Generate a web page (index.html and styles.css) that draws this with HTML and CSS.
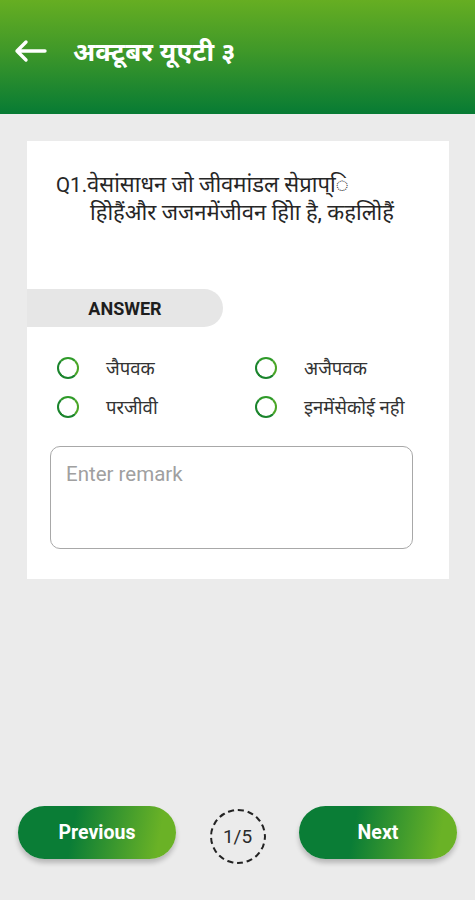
FILE: index.html
```html
<!DOCTYPE html>
<html lang="hi">
<head>
<meta charset="utf-8">
<title>अक्टूबर यूएटी ३</title>
<link rel="stylesheet" href="styles.css">
</head>
<body>
<div class="app">
  <header class="topbar">
    <svg class="back" width="34" height="24" viewBox="0 0 34 24" aria-hidden="true">
      <path d="M32 12H4M13 3L4 12l9 9" fill="none" stroke="#fff" stroke-width="3.4" stroke-linecap="round" stroke-linejoin="round"/>
    </svg>
    <h1 class="title">अक्टूबर यूएटी ३</h1>
  </header>

  <main class="content">
    <section class="card">
      <p class="question"><span class="qno">Q1.</span>वेसांसाधन जो जीवमांडल सेप्राप्ि<br>हिोहैंऔर जजनमेंजीवन हिोा है, कहलािेहैं</p>

      <div class="answer-tab">ANSWER</div>

      <div class="options">
        <label class="option"><span class="radio"></span><span class="opt-text">जैपवक</span></label>
        <label class="option"><span class="radio"></span><span class="opt-text">अजैपवक</span></label>
        <label class="option"><span class="radio"></span><span class="opt-text">परजीवी</span></label>
        <label class="option"><span class="radio"></span><span class="opt-text">इनमेंसेकोई नही</span></label>
      </div>

      <div class="remark">Enter remark</div>
    </section>
  </main>

  <footer class="nav">
    <button class="btn">Previous</button>
    <div class="counter">1/5</div>
    <button class="btn">Next</button>
  </footer>
</div>
</body>
</html>
```

FILE: styles.css
```css
* { box-sizing: border-box; }

html, body {
  margin: 0;
  padding: 0;
}

body {
  background: #ebebeb;
  font-family: Roboto, "Noto Sans", "DejaVu Sans", sans-serif;
  color: #222;
}

.app {
  min-height: 900px;
  display: flex;
  flex-direction: column;
}

.topbar {
  height: 114px;
  background: linear-gradient(180deg, #66ae22 0%, #3f9829 45%, #077b34 100%);
  display: flex;
  align-items: center;
  padding-left: 13px;
  padding-bottom: 12px;
}

.back {
  display: block;
  flex: none;
}

.title {
  margin: 0 0 0 26px;
  color: #fff;
  font-size: 26px;
  font-weight: 700;
  letter-spacing: 0.2px;
}

.content {
  padding: 27px 26px 0 27px;
}

.card {
  background: #fff;
  height: 438px;
  padding: 30px 0 0 0;
}

.question {
  margin: 0;
  padding: 0 10px 0 63px;
  text-indent: -34px;
  font-size: 22px;
  line-height: 28px;
  color: #262626;
  white-space: nowrap;
}

.qno {
  font-size: 20.5px;
}

.answer-tab {
  margin-top: 62px;
  width: 196px;
  height: 38px;
  background: #e6e6e6;
  border-radius: 0 19px 19px 0;
  display: flex;
  align-items: center;
  justify-content: center;
  font-size: 18px;
  font-weight: 700;
  color: #1e1e1e;
}

.options {
  margin-top: 21px;
  padding-left: 30px;
  display: grid;
  grid-template-columns: 198px 198px;
  grid-auto-rows: 39px;
}

.option {
  display: flex;
  align-items: center;
}

.radio {
  width: 22px;
  height: 22px;
  border-radius: 50%;
  border: 2.6px solid #1a842c;
  border-top-color: #2e9a28;
  border-right-color: #4aa626;
  flex: none;
}

.opt-text {
  margin-left: 27px;
  font-size: 18.5px;
  color: #333;
}

.remark {
  margin: 20px 0 0 23px;
  width: 363px;
  height: 103px;
  border: 1.5px solid #a8a8a8;
  border-radius: 10px;
  padding: 15px 0 0 15px;
  font-size: 20.5px;
  color: #a0a0a0;
}

.nav {
  margin-top: auto;
  padding: 0 18px 36px 18px;
  display: flex;
  align-items: flex-start;
  justify-content: space-between;
}

.btn {
  width: 158px;
  height: 53px;
  border: none;
  border-radius: 27px;
  background: linear-gradient(100deg, #0a7d36 0%, #0a7d36 35%, #6ab226 88%, #6ab226 100%);
  color: #fff;
  font-family: Roboto, "Noto Sans", sans-serif;
  font-size: 19.5px;
  font-weight: 700;
  box-shadow: 0 4px 5px rgba(0, 0, 0, 0.22);
  padding: 0;
}

.counter {
  width: 56px;
  height: 55px;
  margin-top: 3px;
  border-radius: 50%;
  border: 2px dashed #222;
  display: flex;
  align-items: center;
  justify-content: center;
  font-size: 19px;
  color: #2a2a2a;
}
```
